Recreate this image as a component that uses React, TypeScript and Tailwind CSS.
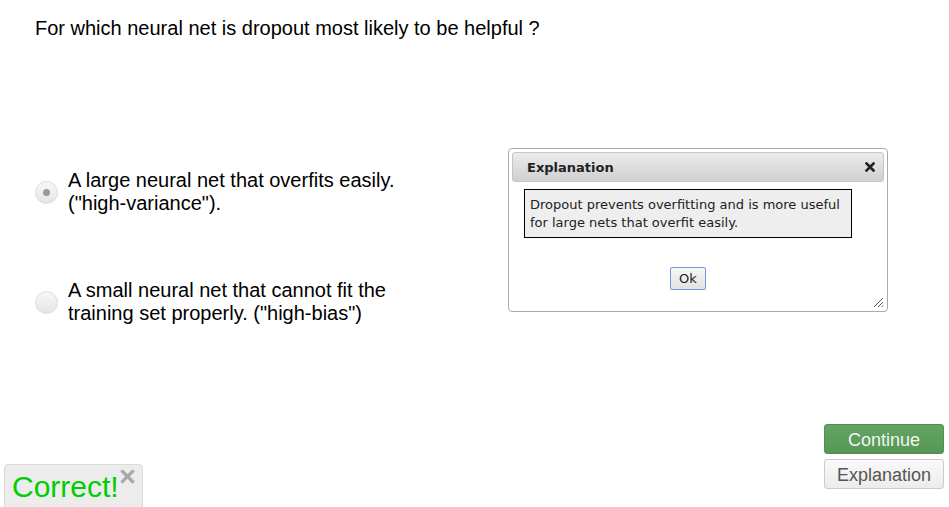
import React from "react";

function Radio({ checked }: { checked?: boolean }) {
  return (
    <div className="w-[23px] h-[23px] shrink-0 rounded-full border border-[#dcdcdc] bg-gradient-to-b from-[#f7f7f7] to-[#e6e6e6] flex items-center justify-center">
      {checked && <div className="w-[7px] h-[7px] rounded-full bg-[#9a9a9a]" />}
    </div>
  );
}

export default function App() {
  return (
    <div className="w-[949px] h-[507px] overflow-hidden bg-white flex flex-col text-black" style={{ fontFamily: '"Liberation Sans", Arial, sans-serif' }}>
      <div className="pt-[17px] pl-[35px] text-[20px] leading-[23px]">
        For which neural net is dropout most likely to be helpful ?
      </div>

      <div className="mt-[108px] flex flex-row items-start">
        <div className="w-[508px] shrink-0 pl-[35px] pt-[21px] flex flex-col gap-[64px]">
          <div className="flex flex-row items-center gap-[10px]">
            <Radio checked />
            <div className="w-[340px] text-[20px] leading-[23px]">
              A large neural net that overfits easily. ("high-variance").
            </div>
          </div>
          <div className="flex flex-row items-center gap-[10px]">
            <Radio />
            <div className="w-[340px] text-[20px] leading-[23px]">
              A small neural net that cannot fit the training set properly. ("high-bias")
            </div>
          </div>
        </div>

        <div
          className="relative shrink-0 w-[380px] h-[164px] border border-[#aaaaaa] rounded-[4px] p-[3px] bg-white"
          style={{ fontFamily: '"DejaVu Sans", Verdana, sans-serif' }}
        >
          <div className="h-[30px] border border-[#c5c5c5] rounded-[3px] bg-gradient-to-b from-[#ececec] to-[#d0d0d0] flex flex-row items-center justify-between pl-[14px] pr-[8px]">
            <span className="text-[13px] font-bold text-[#222222] pt-[1px]">Explanation</span>
            <svg width="10" height="10" viewBox="0 0 10 10">
              <path d="M1.5 1.5 L8.5 8.5 M8.5 1.5 L1.5 8.5" stroke="#222222" strokeWidth="2.6" strokeLinecap="square" />
            </svg>
          </div>
          <div className="pl-[10px] pt-[7px] w-[342px] flex flex-col items-center">
            <div className="w-[328px] border border-black bg-[#eeeeee] px-[5px] pt-[6px] pb-[5px] text-[13px] leading-[18px] text-[#222222]">
              Dropout prevents overfitting and is more useful for large nets that overfit easily.
            </div>
            <button className="mt-[29px] w-[36px] h-[23px] border border-[#6f98e0] rounded-[2px] bg-gradient-to-b from-[#f8f8f8] to-[#e2e2e2] text-[13px] leading-[20px] text-[#222222]">
              Ok
            </button>
          </div>
          <svg className="absolute right-[3px] bottom-[3px]" width="12" height="12" viewBox="0 0 12 12">
            <path d="M11 2 L2 11 M11 6 L6 11 M11 9.5 L9.5 11" stroke="#555555" strokeWidth="1" />
          </svg>
        </div>
      </div>

      <div className="flex-1" />

      <div className="flex flex-row items-end justify-between">
        <div className="relative ml-[4px] w-[139px] h-[46px] -mb-[3px] border border-[#dadada] rounded-t-[4px] bg-[#ececec] pl-[7px] pt-[5px]">
          <span className="text-[30px] leading-[34px] text-[#00cc00]">Correct!</span>
          <svg className="absolute right-[7px] top-[4px]" width="15" height="15" viewBox="0 0 15 15">
            <path d="M2.5 2.5 L12.5 12.5 M12.5 2.5 L2.5 12.5" stroke="#a8a8a8" strokeWidth="3.2" strokeLinecap="square" />
          </svg>
        </div>
        <div className="mr-[5px] mb-[18px] flex flex-col gap-[5px]">
          <button className="w-[120px] h-[30px] rounded-[3px] border border-[#4f8f4f] bg-gradient-to-b from-[#62a562] to-[#569756] text-[18px] leading-[28px] pt-[1px] text-[#f2f2f2]">
            Continue
          </button>
          <button className="w-[120px] h-[30px] rounded-[3px] border border-[#cccccc] bg-gradient-to-b from-[#fafafa] to-[#ececec] text-[18px] leading-[28px] pt-[1px] text-[#555555]">
            Explanation
          </button>
        </div>
      </div>
    </div>
  );
}
